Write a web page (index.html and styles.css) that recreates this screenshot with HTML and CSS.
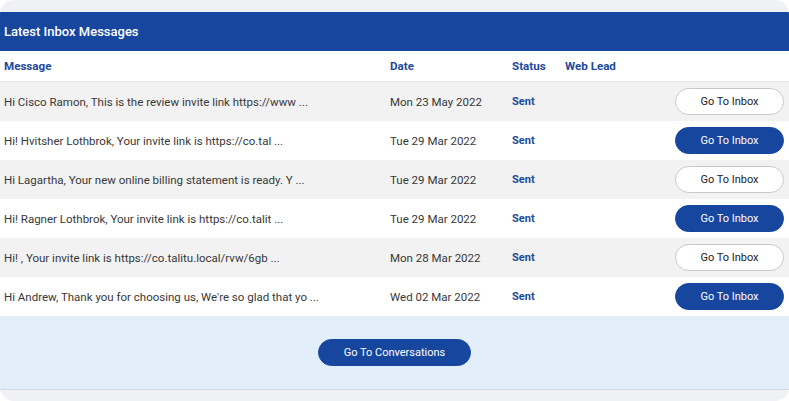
FILE: index.html
```html
<!DOCTYPE html>
<html lang="en">
<head>
  <meta charset="UTF-8">
  <meta name="viewport" content="width=device-width, initial-scale=1.0">
  <title>Latest Inbox Messages</title>
  <link rel="stylesheet" href="styles.css">
</head>
<body>
  <div class="panel">
    <div class="panel-title">Latest Inbox Messages</div>

    <table class="inbox-table">
      <colgroup>
        <col class="col-message">
        <col class="col-date">
        <col class="col-status">
        <col class="col-lead">
        <col class="col-action">
      </colgroup>
      <thead>
        <tr>
          <th>Message</th>
          <th>Date</th>
          <th>Status</th>
          <th>Web Lead</th>
          <th></th>
        </tr>
      </thead>
      <tbody>
        <tr>
          <td>Hi Cisco Ramon, This is the review invite link https://www ...</td>
          <td>Mon 23 May 2022</td>
          <td class="status">Sent</td>
          <td></td>
          <td class="action"><button class="btn btn-outline">Go To Inbox</button></td>
        </tr>
        <tr>
          <td>Hi! Hvitsher Lothbrok, Your invite link is https://co.tal ...</td>
          <td>Tue 29 Mar 2022</td>
          <td class="status">Sent</td>
          <td></td>
          <td class="action"><button class="btn btn-primary">Go To Inbox</button></td>
        </tr>
        <tr>
          <td>Hi Lagartha, Your new online billing statement is ready. Y ...</td>
          <td>Tue 29 Mar 2022</td>
          <td class="status">Sent</td>
          <td></td>
          <td class="action"><button class="btn btn-outline">Go To Inbox</button></td>
        </tr>
        <tr>
          <td>Hi! Ragner Lothbrok, Your invite link is https://co.talit ...</td>
          <td>Tue 29 Mar 2022</td>
          <td class="status">Sent</td>
          <td></td>
          <td class="action"><button class="btn btn-primary">Go To Inbox</button></td>
        </tr>
        <tr>
          <td>Hi! , Your invite link is https://co.talitu.local/rvw/6gb ...</td>
          <td>Mon 28 Mar 2022</td>
          <td class="status">Sent</td>
          <td></td>
          <td class="action"><button class="btn btn-outline">Go To Inbox</button></td>
        </tr>
        <tr>
          <td>Hi Andrew, Thank you for choosing us, We're so glad that yo ...</td>
          <td>Wed 02 Mar 2022</td>
          <td class="status">Sent</td>
          <td></td>
          <td class="action"><button class="btn btn-primary">Go To Inbox</button></td>
        </tr>
      </tbody>
    </table>

    <div class="panel-footer">
      <button class="btn btn-primary btn-wide">Go To Conversations</button>
    </div>
  </div>
</body>
</html>
```

FILE: styles.css
```css
body {
  margin: 0;
  background-color: #ffffff;
  font-family: Roboto, "Liberation Sans", Arial, sans-serif;
  color: #383838;
}
.panel {
  width: 789px;
  height: 401px;
  box-sizing: border-box;
  padding: 12px 0 11px 0;
  background-color: #f0f1f5;
  border-radius: 14px;
  overflow: hidden;
}
.panel-title {
  height: 39px;
  line-height: 39px;
  padding-left: 4px;
  background-color: #17469e;
  color: #ffffff;
  font-size: 13px;
  font-weight: 500;
}
.inbox-table {
  width: 100%;
  border-collapse: collapse;
  table-layout: fixed;
  background-color: #ffffff;
}
.col-message { width: 386px; }
.col-date { width: 122px; }
.col-status { width: 53px; }
.col-action { width: 120px; }
.inbox-table th {
  height: 30px;
  padding: 0 4px;
  text-align: left;
  font-size: 11.6px;
  font-weight: 700;
  color: #1d4a9c;
  border-bottom: 1px solid #e6e6e6;
}
.inbox-table td {
  height: 39px;
  padding: 0 4px;
  font-size: 11.5px;
  white-space: nowrap;
  overflow: hidden;
}
.inbox-table tbody tr:nth-child(odd) {
  background-color: #f2f2f2;
}
.inbox-table td.status {
  font-size: 11px;
  font-weight: 700;
  color: #1d4a9c;
}
.inbox-table td.action {
  text-align: right;
  padding-right: 5px;
}
.btn {
  font-family: inherit;
  font-size: 11px;
  height: 27px;
  width: 109px;
  border-radius: 14px;
  cursor: pointer;
}
.btn-outline {
  background-color: #ffffff;
  border: 1px solid #c8c8c8;
  color: #222222;
}
.btn-primary {
  background-color: #17469e;
  border: 1px solid #17469e;
  color: #ffffff;
}
.btn-wide {
  width: 153px;
}
.panel-footer {
  height: 73px;
  display: flex;
  align-items: center;
  justify-content: center;
  background-color: #e3eefb;
  border-bottom: 1px solid #d4d7db;
}
```
